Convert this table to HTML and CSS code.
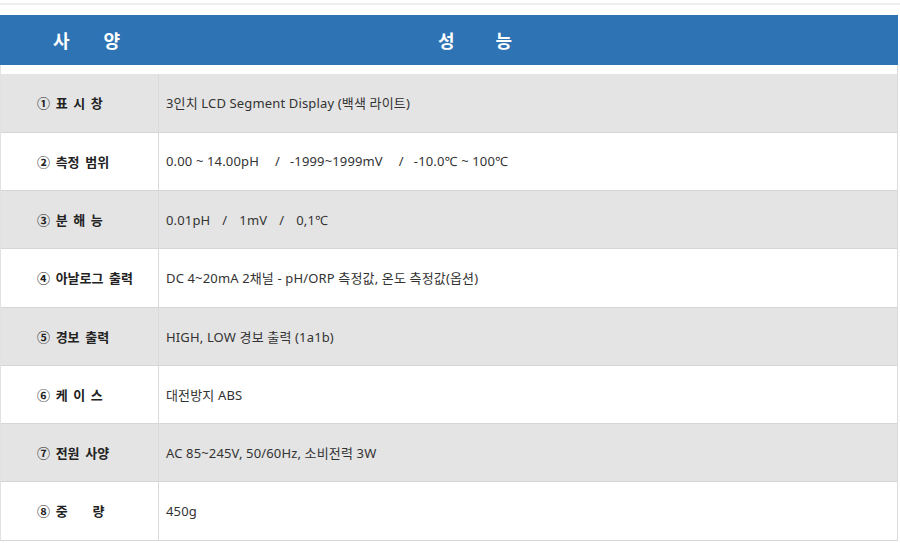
FILE: index.html
```html
<!DOCTYPE html>
<html lang="ko">
<head>
<meta charset="utf-8">
<link rel="stylesheet" href="styles.css">
</head>
<body>
<div class="topline"></div>
<div class="page">
  <div class="head">
    <div class="h-spec">사<span class="gap"></span>양</div>
    <div class="h-perf">성<span class="gap"></span>능</div>
  </div>
  <div class="body">
    <table class="spec">
      <tr class="alt"><th>① 표 시 창</th><td>3인치 LCD Segment Display (백색 라이트)</td></tr>
      <tr><th>② 측정 범위</th><td>0.00 ~ 14.00pH<span class="sep">/</span>-1999~1999mV<span class="sep">/</span>-10.0℃ ~ 100℃</td></tr>
      <tr class="alt"><th>③ 분 해 능</th><td>0.01pH<span class="sep sm">/</span>1mV<span class="sep sm">/</span>0,1℃</td></tr>
      <tr><th>④ 아날로그 출력</th><td>DC 4~20mA 2채널 - pH/ORP 측정값, 온도 측정값(옵션)</td></tr>
      <tr class="alt"><th>⑤ 경보 출력</th><td>HIGH, LOW 경보 출력 (1a1b)</td></tr>
      <tr><th>⑥ 케 이 스</th><td>대전방지 ABS</td></tr>
      <tr class="alt"><th>⑦ 전원 사양</th><td>AC 85~245V, 50/60Hz, 소비전력 3W</td></tr>
      <tr><th>⑧ 중<span class="wide"></span>량</th><td>450g</td></tr>
    </table>
  </div>
</div>
</body>
</html>
```

FILE: styles.css
```css
html, body {
  margin: 0;
  padding: 0;
  background: #fff;
}
body {
  font-family: "Noto Sans", "Noto Sans CJK KR", sans-serif;
  color: #333;
}
.topline {
  margin-top: 3px;
  height: 2px;
  background: #eeeeee;
}
.page {
  width: 898px;
  margin-top: 10px;
}
.head {
  display: flex;
  height: 50px;
  background: #2e74b5;
  color: #fff;
  font-family: "Noto Sans CJK KR", sans-serif;
  font-weight: 700;
  font-size: 18px;
  align-items: center;
}
.h-spec {
  width: 173px;
  text-align: center;
}
.h-perf {
  padding-left: 265px;
}
.gap {
  display: inline-block;
  width: 34px;
}
.h-perf .gap {
  width: 41px;
}
.body {
  border-left: 1px solid #e2e2e2;
  border-right: 1px solid #dcdcdc;
  padding-top: 9px;
}
.spec {
  width: 100%;
  border-collapse: collapse;
  font-size: 13px;
}
.spec tr {
  height: 58.25px;
  border-bottom: 1px solid #d6d6d6;
}
.spec tr.alt {
  background: #e4e4e4;
}
.spec th {
  width: 121px;
  padding: 0 0 0 36px;
  text-align: left;
  font-family: "Noto Sans CJK KR", sans-serif;
  font-weight: 700;
  color: #222;
  word-spacing: 2px;
  border-right: 1px solid #dadada;
  white-space: nowrap;
}
.wide {
  display: inline-block;
  width: 25px;
}
.spec td {
  padding: 0 0 0 7px;
  color: #333;
  letter-spacing: 0.15px;
}
.sep {
  display: inline-block;
  margin: 0 10px 0 16px;
}
.sep.sm {
  margin: 0 12px 0 12px;
}
```
